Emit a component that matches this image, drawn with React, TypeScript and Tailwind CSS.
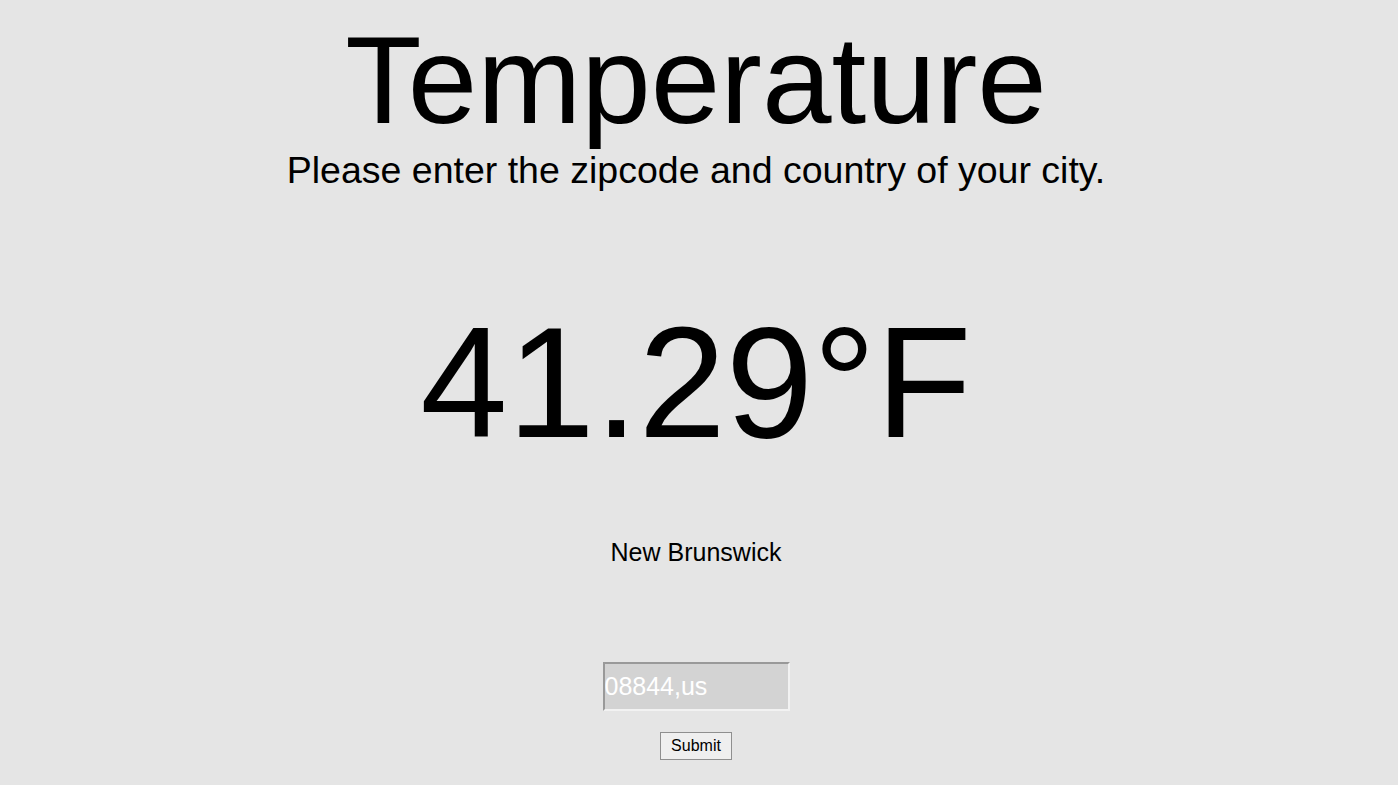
import React, { useState } from "react";

const App: React.FC = () => {
  const [zip, setZip] = useState("08844,us");

  return (
    <div className="min-h-[785px] bg-[#e5e5e5] text-black text-center pr-[6px] font-['Liberation_Sans',Arial,sans-serif]">
      <h1 className="text-[125px] leading-none pt-[17px]">Temperature</h1>
      <p className="text-[37.5px] leading-none mt-[10px]">Please enter the zipcode and country of your city.</p>

      <div className="text-[157px] leading-none mt-[114px]">41.29°F</div>
      <div className="text-[25px] leading-none mt-[79px]">New Brunswick</div>

      <form className="flex flex-col items-center mt-[97px]" onSubmit={(e) => e.preventDefault()}>
        <input
          value={zip}
          onChange={(e) => setZip(e.target.value)}
          className="w-[187px] h-[49px] bg-[#d3d3d3] text-white text-[25px] font-['Liberation_Sans',Arial,sans-serif] px-0 border-2 border-t-[#999] border-l-[#999] border-r-[#f2f2f2] border-b-[#f2f2f2] outline-none"
        />
        <button
          type="submit"
          className="mt-[21px] w-[72px] h-[28px] text-[16px] bg-[#efefef] border border-[#8f8f8f] font-['Liberation_Sans',Arial,sans-serif]"
        >
          Submit
        </button>
      </form>
    </div>
  );
};

export default App;
